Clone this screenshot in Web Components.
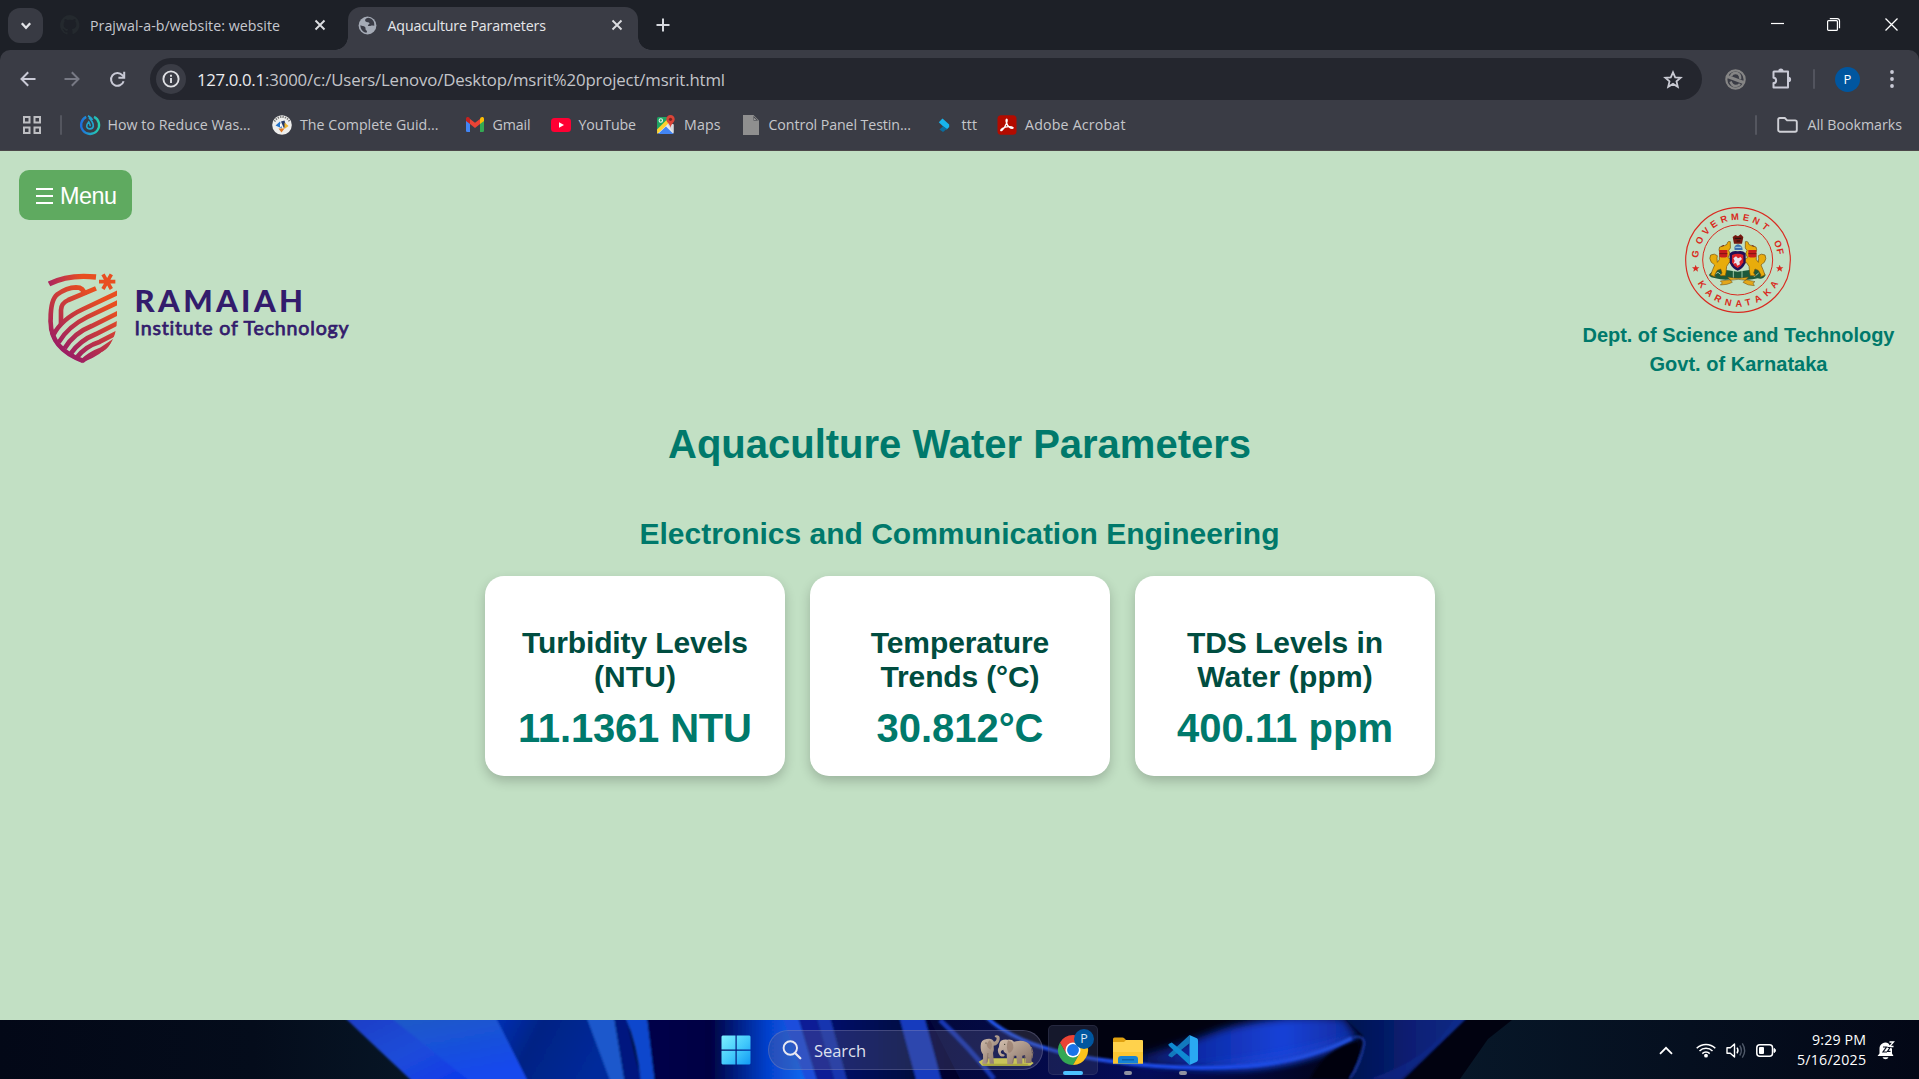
<!DOCTYPE html>
<html lang="en">
<head>
<meta charset="utf-8">
<title>Aquaculture Parameters</title>
<style>
html,body{margin:0;height:100%;overflow:hidden;background:#c2e0c4}
</style>
</head>
<body>
<desktop-screen></desktop-screen>
<script>
const define = (name, css, html, init) => {
  const t = document.createElement('template');
  t.innerHTML = '<style>*{box-sizing:border-box}' + css + '</style>' + html;
  customElements.define(name, class extends HTMLElement {
    connectedCallback() {
      if (this.shadowRoot) return;
      this.attachShadow({mode: 'open'}).append(t.content.cloneNode(true));
      if (init) init(this, this.shadowRoot);
    }
  });
};

/* Single line of text tracked to a given width */
define('fit-text', `:host{display:block;white-space:nowrap;flex:none;overflow:visible}span{display:inline-block}`,
  `<span><slot></slot></span>`, (host, root) => {
    const w = +host.getAttribute('w'), s = root.querySelector('span');
    host.style.width = w + 'px';
    const n = host.textContent.length;
    const natural = s.getBoundingClientRect().width;
    if (natural && n > 1) s.style.letterSpacing = ((w - natural) / (n - 1)).toFixed(3) + 'px';
  });

const S = (w, h, vb, body) => `<svg width="${w}" height="${h}" viewBox="${vb}" fill="none">${body}</svg>`;
const icons = {
  chev: S(12,10,'0 0 12 10','<path d="M1.8 2.2 6 6.8l4.2-4.6" stroke="#e3e4e8" stroke-width="2.3"/>'),
  github: S(20,20,'0 0 16 16','<path fill="#24292e" d="M8 0a8 8 0 0 0-2.5 15.6c.4.1.5-.2.5-.4v-1.500c-2.200.5-2.700-1-2.700-1-.4-.9-.9-1.200-.9-1.200-.7-.5.1-.5.1-.5.8.1 1.200.8 1.200.8.7 1.300 1.900.9 2.300.7.1-.5.3-.9.5-1.100-1.800-.2-3.600-.9-3.600-4 0-.9.3-1.600.8-2.100-.1-.2-.4-1 .1-2.100 0 0 .7-.2 2.200.8a7.500 7.500 0 0 1 4 0c1.500-1 2.200-.8 2.200-.8.4 1.100.2 1.900.1 2.100.5.6.8 1.300.8 2.100 0 3.100-1.900 3.700-3.700 3.900.3.300.6.800.6 1.500v2.200c0 .2.100.5.6.4A8 8 0 0 0 8 0z"/>'),
  x: S(12,12,'0 0 12 12','<path d="M1.500 1.500l9 9M10.500 1.500l-9 9" stroke="#dcdde1" stroke-width="1.900"/>'),
  globe: S(19,19,'0 0 19 19','<circle cx="9.500" cy="9.500" r="8.900" fill="#a5abb6"/><path d="M10.500 1.800C7.500 2 6.400 4.200 7.600 5.400c1.200 1.200 3.600.3 3.900 1.800.2 1.100-1.800 1.200-1.600 2.200.2.900 2.200.7 3 .3.700-.3 2.800-.3 3.300.4.6-4-1.200-7.600-5.700-8.300zM2.400 9.300c1.700.9 3.400.4 4.600 1.600 1.200 1.100-.2 2.200 1.200 3.300.8.700 1.300 1.500.2 2.600C5 16.400 2.300 13.300 2.400 9.300z" fill="#3a3c46"/>'),
  plus: S(14,14,'0 0 14 14','<path d="M7 .5v13M.5 7h13" stroke="#d6d8de" stroke-width="2"/>'),
  min: S(13,13,'0 0 13 13','<path d="M0 5.500h13" stroke="#fff" stroke-width="1.200"/>'),
  restore: S(13,13,'0 0 13 13','<rect x=".6" y="2.600" width="9.800" height="9.800" rx="1" stroke="#fff" stroke-width="1.200"/><path d="M2.800.6h7.500a2.200 2.200 0 0 1 2.200 2.200v7.500" stroke="#fff" stroke-width="1.200"/>'),
  close: S(13,13,'0 0 13 13','<path d="M.5.5l12 12M12.500.5l-12 12" stroke="#fff" stroke-width="1.300"/>'),
  back: S(16,16,'0 0 16 16','<path d="M15.500 8H1.800M8.200 1.200 1.500 8l6.700 6.800" stroke="#c9cad6" stroke-width="2"/>'),
  fwd: S(16,16,'0 0 16 16','<path d="M.5 8h13.700M7.800 1.200 14.500 8l-6.700 6.800" stroke="#777984" stroke-width="2"/>'),
  reload: S(17,17,'0 0 17 17','<path d="M14.600 10.200A6.400 6.400 0 1 1 13.300 4.200L15 6" stroke="#c9cad6" stroke-width="2"/><path d="M15.200.8v5.900H9.400" stroke="#c9cad6" stroke-width="2"/>'),
  info: S(18,18,'0 0 18 18','<circle cx="9" cy="9" r="7.600" stroke="#dfe0e4" stroke-width="1.900"/><path d="M9 8v5M9 4.800v2" stroke="#dfe0e4" stroke-width="1.900"/>'),
  star: S(20,19,'0 0 20 19','<path d="M10 2.300l2.200 5 5.500.5-4.200 3.600 1.300 5.400-4.800-2.900-4.800 2.900 1.300-5.400L2.300 7.800l5.500-.5z" stroke="#c9cad3" stroke-width="1.800"/>'),
  ext: S(21,21,'0 0 21 21','<circle cx="10.500" cy="10.500" r="9.200" stroke="#858585" stroke-width="2.200"/><path d="M2.500 7.500 18.500 13.500" stroke="#858585" stroke-width="3"/><path d="M6 7.200Q7 4 10.500 4t4.500 3.200q.3 2 0 2.800M5.500 12.500q1.500 4.500 5 4.500 3 0 4.500-2" stroke="#858585" stroke-width="2.400"/>'),
  puzzle: S(22,23,'0 0 22 23','<path d="M3 4.500h14v16.100H2.500v-4.500c3.500-.2 3.500-5.200 0-5.400V5z" stroke="#c9cad6" stroke-width="2" stroke-linejoin="round"/><path d="M7.300 4a2.600 2.600 0 0 1 5.200 0zM17.500 9.800a2.600 2.600 0 0 1 0 5.200z" fill="#c9cad6"/>'),
  dots: S(4,18,'0 0 4 18','<g fill="#c9cad6"><circle cx="2" cy="2" r="1.900"/><circle cx="2" cy="9" r="1.900"/><circle cx="2" cy="16" r="1.900"/></g>'),
  apps: S(18,18,'0 0 18 18','<g stroke="#bdbec2" stroke-width="2"><path d="M1 1h5.500v5.500H1zM11.500 1H17v5.500h-5.500zM1 11.500h5.500V17H1zM11.500 11.500H17V17h-5.500z"/></g>'),
  folder: S(21,16,'0 0 21 16','<path d="M1.200 12.800V2.600Q1.200 1 2.800 1h5l2.300 2.400h8q1.700 0 1.700 1.700v7.900q0 1.700-1.700 1.700H2.900q-1.700 0-1.700-1.900z" stroke="#cfd0d6" stroke-width="1.900"/>'),
  swirl: S(20,20,'0 0 20 20','<defs><linearGradient id="g"><stop stop-color="#1d6fe0"/><stop offset="1" stop-color="#25d2ae"/></linearGradient></defs><path d="M6.200 1.900A9 9 0 1 0 14 1.900" stroke="url(#g)" stroke-width="2.300"/><path d="M9 2.500c2.600 3 4.800 5.500 4.300 8.800a3.400 3.400 0 0 1-6.600.1c-.2-2 .8-3 2-4.400.9 1.500 1.600 2.600 1.500 4.200M8 .8c2 1 3.600 2.400 4.500 4.200" stroke="#22a5ce" stroke-width="1.700"/>'),
  guide: S(20,20,'0 0 20 20','<circle cx="10" cy="10" r="9.800" fill="#eeeeec"/><path d="M2.500 6.500A8.400 8.400 0 0 1 17.500 6.500" stroke="#777" stroke-width="2" stroke-dasharray="1.300 1.100"/><path d="M3.500 10.500 8 6.500l2 7z" fill="#2473c8"/><path d="M9 6.500l3.500-1 1.500 5-2 3z" fill="#253a6b"/><path d="M12.500 7.500l4 3.500-4 3z" fill="#f0b52c"/><path d="M6.500 13.500h6l-3 4z" fill="#e27b23"/><path d="M8 8l2 2.500-2 2z" fill="#fff"/>'),
  gmail: S(20,15,'0 0 20 15','<path d="M1 3v10.700q0 1.300 1.300 1.300H5V6z" fill="#4285f4"/><path d="M15 6v9h2.700q1.300 0 1.300-1.300V3z" fill="#34a853"/><path d="M15 2v5l4-3V2c0-2-2-2.400-3.300-1.400z" fill="#fbbc04"/><path d="M5 7V2l5 3.800L15 2v5l-5 3.900z" fill="#ea4335"/><path d="M1 2v2l4 3V2L4.300.6C3-.5 1 0 1 2z" fill="#c5221f"/>'),
  youtube: S(20,14,'0 0 20 14','<rect width="20" height="14" rx="3.500" fill="#ff0033"/><path d="M8 4.200v5.600L13 7z" fill="#fff"/>'),
  maps: S(20,20,'0 0 20 20','<path d="M1 3.500q0-1.500 1.500-1.500H15L1 17z" fill="#1fa463"/><path d="M1 17.500 13 6l4.500 4v8q0 .5-.5.5H3z" fill="#e8eaed"/><path d="M1 14.500 10.500 5l2 3.500L1.200 19z" fill="#fdd22f"/><path d="M2 19l8-7.500 7.500 7.500z" fill="#4285f4"/><path d="M11 9l6.500 9V9z" fill="#d8dadd"/><circle cx="4.800" cy="5.500" r="1.700" stroke="#e9f5ee" stroke-width="1.100"/><path d="M14.500 0a4.200 4.200 0 0 0-4.200 4.300c0 3 3.500 4.500 4.200 8.400.7-3.900 4.200-5.400 4.200-8.400A4.200 4.200 0 0 0 14.500 0z" fill="#db4437"/><circle cx="14.500" cy="4.300" r="1.600" fill="#7b231e"/>'),
  doc: S(20,20,'0 0 20 20','<path d="M2 0h10.500L18 5.500V20H2z" fill="#8f8f8f"/><path d="M12.500 1v4.500H17z" fill="#3b3d45"/><path d="M12.800 2.500V5h2.700z" fill="#9a9a9a"/>'),
  ttt: S(20,20,'0 0 20 20','<path d="M8.500 3.500 4.800 7.200l4.200 4 3.700 3.300 2.500-2.400V9.500z" fill="#17b5ee"/><path d="M9 11.200l-3.500 3.300L9 17l4-3.300z" fill="#0a6ea0"/>'),
  acrobat: S(20,20,'0 0 20 20','<rect x=".5" y=".3" width="19" height="19.400" rx="3.500" fill="#b30b00"/><path d="M9.600 4.200c1.600 0-.2 7-4.800 11.200-1.300.9-1.800-.7.8-2.100 3.500-1.800 8.600-2.200 10.300-.8.900 1-1.500 1.500-3.500-.2C9.500 10.200 8.300 4.200 9.600 4.200z" stroke="#fff" stroke-width="1.300"/>'),
  win: S(30,30,'0 0 30 30','<defs><linearGradient id="g" x2="1" y2="1"><stop stop-color="#7df0ff"/><stop offset=".55" stop-color="#41c8fb"/><stop offset="1" stop-color="#1199f5"/></linearGradient></defs><path d="M1.500.5h13v14H.5v-13zM15.700.5h12.800l1 1v13H15.700zM.5 15.700h14v13.800h-13l-1-1zM15.700 15.700h13.800v12.800l-1 1H15.700z" fill="url(#g)"/>'),
  search: S(20,20,'0 0 20 20','<circle cx="8.300" cy="8" r="6.700" stroke="#e9e9f2" stroke-width="1.900"/><path d="M13 13l5.300 5.300" stroke="#e9e9f2" stroke-width="2.300" stroke-linecap="round"/>'),
  elephants: S(56,32,'0 0 168 96',`<defs><linearGradient id="e" x2="1" y2="1"><stop stop-color="#d3bfae"/><stop offset="1" stop-color="#857065"/></linearGradient></defs>
   <path d="M2 80l18-10h125l22 14-10 8H12z" fill="#c9c45a"/><path d="M12 86h140l-6 6H18z" fill="#aaa83e"/>
   <path d="M8 32Q8 14 26 12q16-4 22 8 8-2 8-12l-5-2q-3-5 4-5 12 0 10 13-4 16-18 18 2 14-2 22l3 32H35l-2-20-6 20H12q5-16 3-28-8-10-7-26z" fill="url(#e)"/>
   <path d="M64 26q4-14 24-12 14-2 20 6 32-8 46 8 8 10 8 30l-2 26h-16l-3-24-8 2 0 24h-16l-2-24h-6l-4 26H88l-2-32q-10-4-10-12-8 2-8 8 2 6 8 6 4 0 4 4-6 5-14 0-8-8-6-20 4-6 4-16z" fill="url(#e)"/>
   <path d="M34 16q14 10 4 28-12-6-12-16zM90 16q18 4 16 24-4 12-14 14-10-14-2-38z" fill="#9b8172" opacity=".8"/>
   <path d="M160 36q8 16 2 34" stroke="#8a7568" stroke-width="3"/><path d="M108 62l-4 22M30 54l-3 28M138 60l3 24" stroke="#7c675b" stroke-width="2"/><circle cx="24" cy="24" r="1.800" fill="#332"/><circle cx="80" cy="28" r="1.800" fill="#332"/>`),
  chrome: S(30,30,'0 0 48 48','<path d="M24 24l10.400 6L24 48A24 24 0 0 1 3.200 12l10.400 18z" fill="#34a853"/><path d="M24 12h20.800A24 24 0 0 1 24 48l10.400-18z" fill="#fbc31c"/><path d="M3.200 12A24 24 0 0 1 44.800 12H24L13.600 30z" fill="#ea4335"/><circle cx="24" cy="24" r="12" fill="#fff"/><circle cx="24" cy="24" r="9.500" fill="#1a73e8"/>'),
  files: S(30,27,'0 0 30 27','<path d="M0 2Q0 .5 1.500.5h8q1 0 2 1L13 3h0v5H0z" fill="#dfa111"/><path d="M0 5h11l2-2h16q1 0 1 1v22.500H0z" fill="#ffd24c"/><path d="M0 15h30v11.500H0z" fill="#fbc632"/><path d="M5 26.500V22q0-3 3-3h14q3 0 3 3v4.500z" fill="#1583d6"/><path d="M9 22.800h12" stroke="#0a5fa5" stroke-width="1.300"/>'),
  vscode: S(30,30,'0 0 30 30','<path d="M21.500 0v8.200L3.800 22.600 1 21.200q-1.500-1 0-2.300z" fill="#1279bd"/><path d="M21.500 30v-8.200L3.800 7.400 1 8.800Q-.5 9.800 1 11.100z" fill="#0f8ad2"/><path d="M21.500 0 28.800 3.300Q30 4 30 5.200v19.600q0 1.200-1.200 1.900L21.500 30z" fill="#2aa9f2"/>'),
  up: S(14,9,'0 0 14 9','<path d="M1 7.800 7 1.800l6 6" stroke="#fff" stroke-width="1.800"/>'),
  wifi: S(20,16,'0 0 20 16','<g stroke="#fff" stroke-width="1.500"><path d="M.7 6.300a13 13 0 0 1 18.600 0M3.500 9a9.200 9.200 0 0 1 13 0M6.300 11.600a5.300 5.300 0 0 1 7.400 0"/></g><circle cx="10" cy="13.700" r="1.900" fill="#fff"/>'),
  sound: S(20,17,'0 0 20 17','<path d="M1 5.800h3.300L8.500 2v13l-4.200-3.800H1z" stroke="#fff" stroke-width="1.400" stroke-linejoin="round"/><path d="M11 5.700q2 2.800 0 5.600" stroke="#fff" stroke-width="1.400"/><path d="M13.700 3.500q3.300 5 0 10M16.300 1.300q4.600 7.200 0 14.400" stroke="#505a6a" stroke-width="1.400"/>'),
  battery: S(20,13,'0 0 20 13','<rect x=".8" y=".8" width="15.700" height="11.400" rx="3" stroke="#fff" stroke-width="1.500"/><rect x="3" y="3" width="5" height="7" rx="1" fill="#fff"/><path d="M18 4.500v4q1.500-.5 1.500-2t-1.500-2z" fill="#fff" stroke="#fff"/>'),
  bell: S(18,19,'0 0 18 19','<path d="M2.500 12.500V8a6 6 0 0 1 9-5.500L15 8v4.500l1.500 2.500h-16z" fill="#fff"/><path d="M5.500 16.300h6q-.8 2-3 2t-3-2z" fill="#fff"/><path d="M12.500 1h4l-4 4.500h4" stroke="#fff" stroke-width="1.300"/><path d="M6 6h3.500L6 11h4M10.500 6.500H13l-2.500 3.800h3" stroke="#0a1020" stroke-width="1.200"/>')
};
define('ui-icon', ':host{display:inline-flex;flex:none;align-items:center;justify-content:center}svg{display:block;overflow:visible}', '<div></div>',
  (h, r) => { r.querySelector('div').innerHTML = icons[h.getAttribute('name')]; });

/* ---------- Browser ---------- */
define('tab-strip', `:host{display:flex;height:50px;align-items:flex-start;background:#1d2027;font:14.2px/20px "Open Sans",sans-serif;color:#c6c8cf}
 fit-text{margin-top:1px}
 .dd{width:35px;height:35px;margin:8px 0 0 8px;border-radius:12px;background:#383a43;display:flex;align-items:center;justify-content:center}
 .tab{height:43px;margin-top:7px;display:flex;align-items:center;padding-bottom:7px}
 .t1{margin-left:17px;width:288px}
 .act{width:290px;height:43px;background:#3a3c45;border-radius:13px 13px 0 0;color:#e6e7ea;position:relative}
 .act:before,.act:after{content:"";position:absolute;bottom:0;width:13px;height:13px}
 .act:before{left:-13px;background:radial-gradient(circle at 0 0,transparent 12.5px,#3a3c45 13px)}
 .act:after{right:-13px;background:radial-gradient(circle at 100% 0,transparent 12.5px,#3a3c45 13px)}
 .plus{margin:18px 0 0 18px}.win{margin:18px 21.500px 0 auto;display:flex;gap:43.500px}`,
 `<div class="dd"><ui-icon name="chev"></ui-icon></div>
 <div class="tab t1"><ui-icon name="github"></ui-icon><fit-text w="190" style="margin-left:10px">Prajwal-a-b/website: website</fit-text><ui-icon name="x" style="margin-left:34px"></ui-icon></div>
 <div class="tab act"><ui-icon name="globe" style="margin-left:9.500px"></ui-icon><fit-text w="158.500" style="margin-left:11px">Aquaculture Parameters</fit-text><ui-icon name="x" style="margin-left:65px"></ui-icon></div>
 <ui-icon class="plus" name="plus"></ui-icon>
 <div class="win"><ui-icon name="min"></ui-icon><ui-icon name="restore"></ui-icon><ui-icon name="close" style="margin-left:1px"></ui-icon></div>`);

define('nav-bar', `:host{display:flex;height:54px;padding-top:4px;align-items:center;background:#3a3c45;border-radius:10px 10px 0 0}
 .omni{margin-left:24px;width:1552px;height:42px;border-radius:21px;background:#24262e;display:flex;align-items:center;font:16.800px/24px "Open Sans",sans-serif;color:#c3c4c9}
 .i{width:30px;height:30px;border-radius:15px;background:#3a3c45;margin:0 11px 0 6px;display:flex;align-items:center;justify-content:center}
 .omni fit-text{margin-top:1px}
 .sep{width:2px;height:20px;background:#52545e;margin-left:20px;border-radius:1px}
 .av{width:25px;height:25px;border-radius:50%;background:#00569f;color:#fff;font:13px/25px "Open Sans",sans-serif;text-align:center;margin-left:20.500px}`,
 `<ui-icon name="back" style="margin-left:19.500px"></ui-icon><ui-icon name="fwd" style="margin-left:28.500px"></ui-icon><ui-icon name="reload" style="margin-left:29px"></ui-icon>
 <div class="omni"><div class="i"><ui-icon name="info"></ui-icon></div><fit-text w="68" style="color:#ececee">127.0.0.1</fit-text><fit-text w="460">:3000/c:/Users/Lenovo/Desktop/msrit%20project/msrit.html</fit-text><ui-icon name="star" style="margin:0 19.500px 0 auto"></ui-icon></div>
 <ui-icon name="ext" style="margin-left:23px"></ui-icon><ui-icon name="puzzle" style="margin-left:24.500px;margin-top:-2px"></ui-icon><div class="sep"></div><div class="av">P</div><ui-icon name="dots" style="margin-left:30px"></ui-icon>`);

define('book-mark', `:host{display:flex;align-items:center;flex:none}ui-icon{width:20px;margin-right:8px}`, `<ui-icon></ui-icon><slot></slot>`,
 (h, r) => { const o = r.querySelector('ui-icon'), n = document.createElement('ui-icon'); n.setAttribute('name', h.getAttribute('icon')); o.replaceWith(n); });

define('bookmarks-bar', `:host{display:flex;height:47px;padding-bottom:5px;align-items:center;background:#3a3c45;font:14.200px/20px "Open Sans",sans-serif;color:#c6c7cb;border-bottom:1px solid #4b4849}
 .sep{width:2px;height:20px;background:#54565f;border-radius:1px}`,
 `<ui-icon name="apps" style="margin-left:23px"></ui-icon><div class="sep" style="margin:0 17.500px 0 19px"></div>
 <book-mark icon="swirl"><fit-text w="143">How to Reduce Was...</fit-text></book-mark>
 <book-mark icon="guide" style="margin-left:21.500px"><fit-text w="138.500">The Complete Guid...</fit-text></book-mark>
 <book-mark icon="gmail" style="margin-left:26px"><fit-text w="38">Gmail</fit-text></book-mark>
 <book-mark icon="youtube" style="margin-left:20px"><fit-text w="57.500">YouTube</fit-text></book-mark>
 <book-mark icon="maps" style="margin-left:20px"><fit-text w="36.500">Maps</fit-text></book-mark>
 <book-mark icon="doc" style="margin-left:20px"><fit-text w="142.500">Control Panel Testin...</fit-text></book-mark>
 <book-mark icon="ttt" style="margin-left:22.500px"><fit-text w="15.500">ttt</fit-text></book-mark>
 <book-mark icon="acrobat" style="margin-left:20px"><fit-text w="100.500">Adobe Acrobat</fit-text></book-mark>
 <div class="sep" style="margin-left:auto"></div><ui-icon name="folder" style="margin:0 10px 0 20px"></ui-icon><fit-text w="94.500" style="margin-right:17px">All Bookmarks</fit-text>`);

/* ---------- Page ---------- */
define('menu-button', `:host{display:flex;align-items:center;width:113px;height:50px;border-radius:10px;background:#5faa60;color:#fff;font:23.400px/26px "Liberation Sans",sans-serif;padding-left:17px}
 svg{margin:1px 7px 0 0}fit-text{margin-top:2px}`, `<svg width="17" height="18" viewBox="0 0 17 18"><path d="M0 2h17M0 9h17M0 16h17" stroke="#fff" stroke-width="1.900"/></svg><fit-text w="57">Menu</fit-text>`);

define('institute-logo', `:host{display:flex;align-items:flex-start;color:#331c6c;font-family:Lato,sans-serif}
 .t{margin:11px 0 0 16.500px}.a{font-size:31px;line-height:32px;font-weight:900}.b{font-size:19.600px;line-height:24px;font-weight:400;-webkit-text-stroke:.75px #331c6c}`,
 `<svg width="70" height="92" viewBox="144 354 210 276" fill="none"><defs><linearGradient id="g" gradientUnits="userSpaceOnUse" x1="170" y1="580" x2="290" y2="420"><stop stop-color="#9a1d65"/><stop offset="1" stop-color="#e84e20"/></linearGradient>
 <linearGradient id="g2" gradientUnits="userSpaceOnUse" x1="145" y1="0" x2="245" y2="0"><stop stop-color="#ab2560"/><stop offset="1" stop-color="#e84e20"/></linearGradient>
 <clipPath id="c"><path d="M144 390H351V490Q352 590 250 627Q144 590 144 500z"/></clipPath></defs>
 <path d="M147 387Q205 357 288 366" stroke="url(#g2)" stroke-width="16"/>
 <g clip-path="url(#c)" stroke="url(#g)" stroke-width="14">
 <path d="M254 420Q252 397 228 397Q200 398 172 418Q152 434 152 490Q146 580 250 618"/>
 <path d="M183 510V465Q183 445 205 435L288 400"/>
 <path d="M160 540Q185 492 250 462L356 412"/><path d="M176 562Q205 514 262 486L356 441"/><path d="M194 580Q222 534 275 513L356 473"/><path d="M212 596Q240 556 288 537L356 503"/><path d="M230 608Q255 574 300 560L356 531"/><path d="M246 619Q270 596 305 583L345 556"/><path d="M250 618Q300 600 334 560" stroke-width="6"/></g>
 <path d="M297 380h49M309 358l25 44M334 358l-25 44" stroke="#e84e20" stroke-width="11"/></svg>
 <div class="t"><fit-text class="a" w="168.500">RAMAIAH</fit-text><fit-text class="b" w="214.500">Institute of Technology</fit-text></div>`);

define('state-emblem', `:host{display:block;width:106px;height:106px}svg{display:block}text{font:bold 28px "Liberation Sans",sans-serif;fill:#d92a20;text-anchor:middle}`,
 `<svg width="106" height="106" viewBox="375 36 318 318" fill="none"><g stroke="#d92a20" stroke-width="3.500"><circle cx="534" cy="195" r="157"/><circle cx="533" cy="195" r="105" stroke-width="3"/></g>
 <g id="ring"></g>
 <path fill="#d92a20" d="M407 209l3 8h8l-6 5 2 8-7-5-7 5 2-8-6-5h8zM659 209l3 8h8l-6 5 2 8-7-5-7 5 2-8-6-5h8z"/>
 <path d="M447 240q4-10 18-10 10-12 28-6l40 6 40-6q18-6 24 4 14 2 20 12-6 14-24 10-30 8-60 0-40 8-66 0-16-2-20-10z" fill="#1d5a3b"/>
 <path d="M460 240l14-8 10 8 12-8M570 236l14 8 12-10M520 228v22M546 228v22" stroke="#9ec5a6" stroke-width="3"/>
 <path id="lion" d="M511 140q-9-3-10 8l-8 4-14 4q-4 8 0 16l-1 22-6 8q-2-14 0-20-8-8-20-2-6 10 2 22 6 4 10 8l-6 14-6 16 14 6-2-6 8-14 10-4 4 12-6 8h16l2-10 2-18 8-12 6 4-2-14-8-4 6-12-4-10q8-6 5-16z" fill="#e8ac0c" stroke="#77500b" stroke-width="2"/>
 <use href="#lion" transform="translate(1067 0) scale(-1 1)"/>
 <path d="M478 165h24v20q-12 5-24 0zM565 165h24v20q-12 5-24 0z" fill="#c81d1c"/>
 <path d="M478 176h24M565 176h24M484 154l8-3M575 151l8 3" stroke="#6d1510" stroke-width="2.500"/>
 <path d="M509 175q12-10 24-6 14-4 24 6v28q-8 18-24 24-16-6-24-24z" fill="#211055"/><path d="M516 180q18-8 34 0v22q-6 12-17 17-12-5-17-17z" fill="#d9202a"/>
 <path d="M520 190l8-6 6 6 8-4 4 6-8 8 2 8-8 4-4-8-8 2 4-8z" fill="#e9e0ea"/>
 <path d="M524 165q-4-14 10-17 14 3 14 17z" fill="#3b6fae"/><path d="M526 157h18" stroke="#a9d2e8" stroke-width="3"/>
 <path d="M522 146l-4-20 8-6 8 4 8-6 8 8-4 20z" fill="#74180f"/><path d="M524 130h20M530 138h10" stroke="#24110f" stroke-width="3"/>
 <path d="M503 246q30 8 62 0l-8 10q-22-6-46 0zM511 254l-30 4 6 6-6 6q22 0 36-8zM557 254l28 6-6 4 4 8q-20 0-34-10z" fill="#e3a71a" stroke="#6b4a10" stroke-width="1.500"/></svg>`,
 (h, r) => {
   const ring = r.getElementById('ring');
   const put = (c, a, rot) => {
     const t = document.createElementNS('http://www.w3.org/2000/svg', 'text');
     const x = 534 + 130 * Math.sin(a * Math.PI / 180), y = 195 - 130 * Math.cos(a * Math.PI / 180);
     t.setAttribute('transform', `translate(${x.toFixed(1)} ${y.toFixed(1)}) rotate(${rot})`);
     t.setAttribute('y', 10); t.textContent = c; ring.append(t);
   };
   [...'GOVERMENTOF'].forEach((c, i) => { const a = [-82,-63,-48,-34,-19,-4,11,25,39.500,68,78.500][i]; put(c, a, a); });
   [...'KARNATAKA'].forEach((c, i) => { const a = [56,41,27.500,13,-1,-13.500,-27,-42,-56][i]; put(c, 180 + a, a); });
 });

define('page-header', `:host{display:flex;justify-content:space-between;height:270px;padding:19px 24.500px 0 19px}
 institute-logo{margin:53px 0 0 29px}
 .r{display:flex;flex-direction:column;align-items:center;padding-top:37px;font:bold 20px/29px "Liberation Sans",sans-serif;color:#00796b}state-emblem{margin:0 2px 8px 0}`,
 `<div><menu-button></menu-button><institute-logo></institute-logo></div>
 <div class="r"><state-emblem></state-emblem><fit-text w="312">Dept. of Science and Technology</fit-text><fit-text w="178">Govt. of Karnataka</fit-text></div>`);

define('param-card', `:host{display:flex;flex-direction:column;align-items:center;width:300px;height:200px;padding:50px 0 0 1px;border-radius:19px;background:#fff;box-shadow:0 5px 12px rgba(0,0,0,.2);font:bold 30px/34px "Liberation Sans",sans-serif;color:#004d40}
 .v{margin-top:11px;font-size:40px;line-height:46px;color:#00796b}`, `<slot></slot><div class="v"><slot name="value"></slot></div>`);

define('water-page', `:host{display:flex;flex-direction:column;height:869px;background:#c2e0c4;color:#00796b;font:bold 30px/34px "Liberation Sans",sans-serif}
 page-header{flex:none}.c{display:flex;flex-direction:column;align-items:center}.h1{font-size:40px;line-height:46px;margin-bottom:50px}.cards{display:flex;gap:25px;margin-top:25px}`,
 `<page-header></page-header><div class="c"><fit-text class="h1" w="583">Aquaculture Water Parameters</fit-text><fit-text w="640">Electronics and Communication Engineering</fit-text>
 <div class="cards">
 <param-card><fit-text w="226">Turbidity Levels</fit-text><fit-text w="82">(NTU)</fit-text><fit-text slot="value" w="234">11.1361 NTU</fit-text></param-card>
 <param-card><fit-text w="178.500">Temperature</fit-text><fit-text w="159">Trends (°C)</fit-text><fit-text slot="value" w="167">30.812°C</fit-text></param-card>
 <param-card><fit-text w="196">TDS Levels in</fit-text><fit-text w="175.500">Water (ppm)</fit-text><fit-text slot="value" w="216">400.11 ppm</fit-text></param-card>
 </div></div>`);

/* ---------- Taskbar ---------- */
define('wall-paper', ':host{display:block;width:1919px;height:59px}svg{display:block}', `<svg width="1919" height="59" viewBox="0 0 1919 59" preserveAspectRatio="none"><defs>
 <linearGradient id="a" x2="1" y2="0"><stop stop-color="#030817"/><stop offset=".6" stop-color="#040c1b"/><stop offset="1" stop-color="#071626"/></linearGradient>
 <linearGradient id="b" x2="1" y2="0"><stop stop-color="#071728"/><stop offset="1" stop-color="#030716"/></linearGradient>
 <linearGradient id="r1" x2="1" y2="1"><stop stop-color="#1b3cc4"/><stop offset=".5" stop-color="#1f4cd8"/><stop offset="1" stop-color="#0b37ee"/></linearGradient>
 <linearGradient id="r2" x2=".4" y2="1"><stop stop-color="#205bc4"/><stop offset="1" stop-color="#1248ee"/></linearGradient>
 <linearGradient id="r3" x2="1" y2=".3"><stop stop-color="#0630b8"/><stop offset=".4" stop-color="#062384"/><stop offset="1" stop-color="#052a9b"/></linearGradient>
 <linearGradient id="d"><stop stop-color="#03024a"/><stop offset=".4" stop-color="#030243"/><stop offset=".75" stop-color="#0540cc"/><stop offset="1" stop-color="#0f6cf2"/></linearGradient>
 <linearGradient id="m"><stop stop-color="#06106a"/><stop offset="1" stop-color="#020220"/></linearGradient>
 <linearGradient id="f"><stop stop-color="#0a2390" stop-opacity=".3"/><stop offset=".35" stop-color="#0c2aa6"/><stop offset=".7" stop-color="#1a42d8"/><stop offset="1" stop-color="#0e2a9c"/></linearGradient>
 <linearGradient id="l" gradientUnits="userSpaceOnUse" x1="985" y1="0" x2="1365" y2="0"><stop stop-color="#2453e6"/><stop offset=".6" stop-color="#1c49e8"/><stop offset="1" stop-color="#2450d6"/></linearGradient>
 <linearGradient id="n"><stop stop-color="#03083a"/><stop offset=".5" stop-color="#040c58"/><stop offset="1" stop-color="#010212"/></linearGradient>
 <linearGradient id="h"><stop stop-color="#04124f"/><stop offset=".6" stop-color="#082077"/><stop offset="1" stop-color="#0b2c86"/></linearGradient>
 <filter id="s" filterUnits="userSpaceOnUse" x="300" y="-20" width="1300" height="100"><feGaussianBlur stdDeviation="1"/></filter>
 <filter id="s3" filterUnits="userSpaceOnUse" x="900" y="-20" width="700" height="100"><feGaussianBlur stdDeviation="5 4"/></filter></defs>
 <rect width="1919" height="59" fill="#010210"/><rect width="420" height="59" fill="url(#a)"/>
 <g filter="url(#s)">
 <path d="M343 -4h49l83 67h-61z" fill="url(#r1)"/><path d="M389 -4h107l33 67h-57z" fill="url(#r2)"/><path d="M495 -4h94l24 67h-84z" fill="url(#r3)"/>
 <path d="M586 -4h28l11 67h-14z" fill="#1b58cc"/><path d="M614 -4h12l16 67h-17z" fill="#04187f"/><path d="M625 -4h22l8 67h-14q-4-38-16-67z" fill="#1046cd"/>
 <path d="M647 -4h136l24 67H655z" fill="url(#d)"/><path d="M782 -4h16l20 67h-12z" fill="#1c4edc"/><path d="M798 -4h18l19 67h-17z" fill="#0a1f96"/><path d="M816 -4h14l18 67h-13z" fill="#1436b0"/><path d="M830 -4h100l44 67H848z" fill="url(#m)"/>
 <path d="M899 -4h25l18 67h-25z" fill="#133abe"/></g>
 <path d="M985 0q35 30 125 42 70 10 136 5 60-5 106-29h12l-12 41H960l-30-59z" fill="url(#n)"/>
 <path d="M940 0q30 28 54 59" stroke="#1437b4" stroke-width="5" filter="url(#s)"/>
 <path d="M1110 42q60-12 110-32 60-18 125-12l12 19q-50 26-110 30-70 4-137-5z" fill="url(#f)" filter="url(#s3)"/>
 <path d="M1180 48q100-8 172-31l4 1q-50 26-110 30z" fill="#1a46dc" filter="url(#s3)"/>
 <path d="M985 -4q35 34 125 45 70 10 136 5 60-5 106-28" fill="none" stroke="url(#l)" stroke-width="4" filter="url(#s)"/>
 <g filter="url(#s)"><path d="M1345 -2h122l-67 65h-50q14-24 13-47z" fill="url(#h)"/><path d="M1455 -2h12l-67 61h-30q60-20 85-61z" fill="#0d2c92" opacity=".5"/><path d="M1310 59q14-30 48-38 5 18-8 38z" fill="#020210"/><path d="M1352 18q12-4 12 6-4 20-14 35" stroke="#1b389f" stroke-width="2" fill="none"/></g>
 <path d="M1512 0H1919V59H1460l28-40z" fill="url(#b)"/></svg>`);

define('task-bar', `:host{display:grid;height:59px;font-family:"Open Sans",sans-serif;color:#fff}
 wall-paper,.row{grid-area:1/1}.row{display:flex;align-items:center;height:59px;padding:1px 0 0 721px;z-index:1}
 .s{width:275px;height:40px;margin-left:17px;border-radius:20px;background:rgba(100,100,140,.3);border:1px solid rgba(160,160,200,.28);display:flex;align-items:center;padding-left:13px;font-size:16.500px;color:#dfe0ee}
 .app{width:50px;height:50px;display:flex;flex-direction:column;align-items:center;justify-content:space-between;border-radius:5px;padding-top:10px;position:relative}
 .on{background:rgba(70,75,110,.3);border:1px solid rgba(110,115,150,.18);margin-left:5px;padding-top:9px}
 .u{width:8px;height:4px;border-radius:2px;background:#8f92a0}.on .u{width:20px;background:#4cc2ff;margin-bottom:-1px}
 .p{position:absolute;left:25px;top:3px;width:20px;height:20px;border-radius:50%;background:#00569f;font:12.500px/20px "Open Sans",sans-serif;text-align:center;color:#d8e6f4}
 .clk{display:flex;flex-direction:column;align-items:flex-end;margin-left:21px;font-size:14.200px;line-height:20px}`,
 `<wall-paper></wall-paper><div class="row"><ui-icon name="win"></ui-icon>
 <div class="s"><ui-icon name="search"></ui-icon><fit-text w="52" style="margin:1px 0 0 12px">Search</fit-text><ui-icon name="elephants" style="margin:2px 8px 0 auto"></ui-icon></div>
 <div class="app on"><ui-icon name="chrome"></ui-icon><span class="p">P</span><div class="u"></div></div>
 <div class="app" style="margin-left:5px;padding-top:12px"><ui-icon name="files"></ui-icon><div class="u"></div></div>
 <div class="app" style="margin-left:5px"><ui-icon name="vscode"></ui-icon><div class="u"></div></div>
 <ui-icon name="up" style="margin-left:451px"></ui-icon><ui-icon name="wifi" style="margin-left:23px"></ui-icon><ui-icon name="sound" style="margin-left:10px"></ui-icon><ui-icon name="battery" style="margin-left:10px"></ui-icon>
 <div class="clk"><fit-text w="54">9:29 PM</fit-text><fit-text w="69">5/16/2025</fit-text></div><ui-icon name="bell" style="margin-left:10.500px"></ui-icon></div>`);

define('desktop-screen', ':host{display:flex;flex-direction:column;width:1919px;height:1079px;overflow:hidden}.nav{background:#1d2027;flex:none}tab-strip,bookmarks-bar,water-page,task-bar{flex:none}',
 `<tab-strip></tab-strip><div class="nav"><nav-bar></nav-bar></div><bookmarks-bar></bookmarks-bar><water-page></water-page><task-bar></task-bar>`);
</script>
</body>
</html>
